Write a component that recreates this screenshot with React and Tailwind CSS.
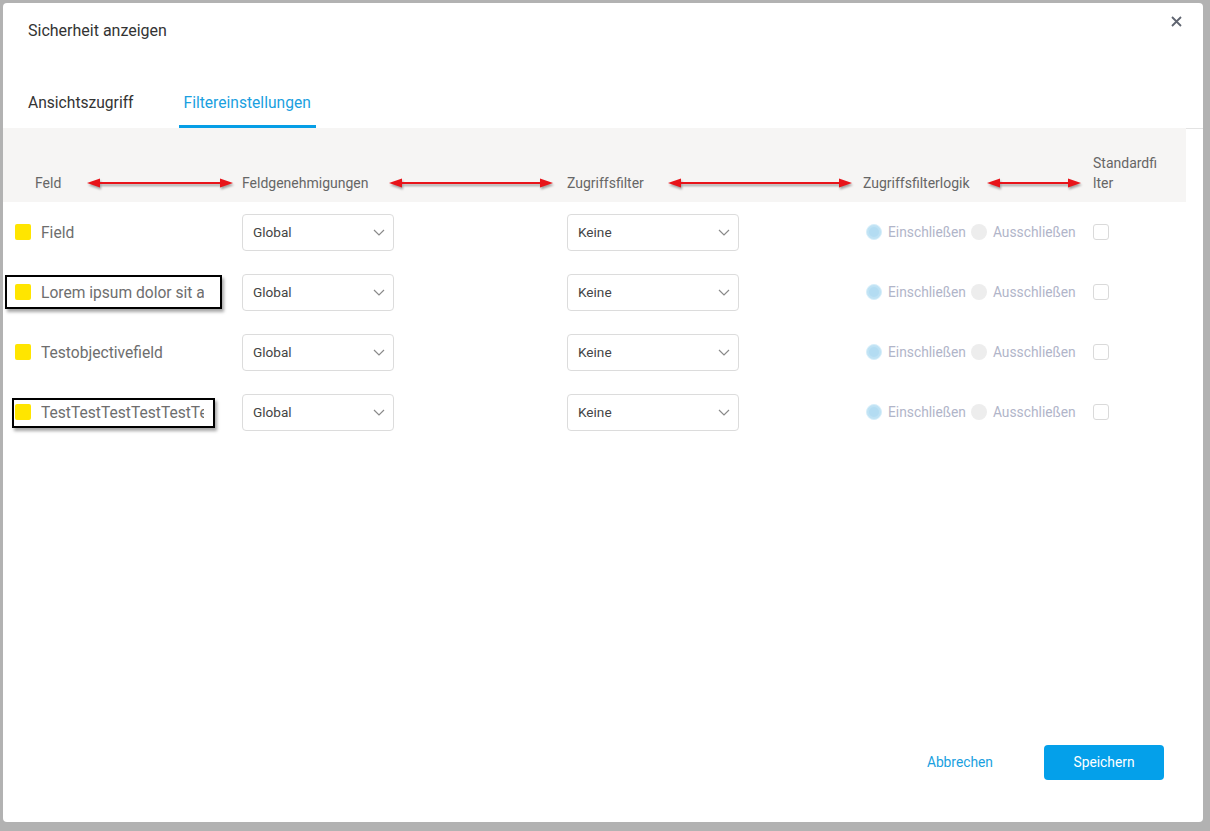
import { useState } from "react"

const rows = [
  { id: 1, name: "Field", marked: null },
  { id: 2, name: "Lorem ipsum dolor sit amet consectetur", marked: "a" },
  { id: 3, name: "Testobjectivefield", marked: null },
  { id: 4, name: "TestTestTestTestTestTestTest", marked: "b" },
]

// page x coords of the red annotation arrows (tip to tip)
const arrows = [
  [87, 233],
  [389, 553],
  [668, 852],
  [987, 1081],
]

function Chevron() {
  return (
    <svg width="12" height="7" viewBox="0 0 12 7" fill="none">
      <path d="M1 1l5 5 5-5" stroke="#8a8a8a" strokeWidth="1.2" />
    </svg>
  )
}

function Select({ value, width }) {
  return (
    <div className={`${width} h-[37px] border border-[#dcdcdc] rounded-[4px] flex items-center justify-between pl-[10px] pr-[8px] text-[13.6px] text-[#444]`}>
      <span>{value}</span>
      <Chevron />
    </div>
  )
}

export default function App() {
  const [tab, setTab] = useState(1)

  return (
    <div className="min-h-screen bg-[#b2b2b2] p-[3px] font-['Roboto',sans-serif]">
      <div className="relative w-[1200px] h-[819px] bg-white rounded-[4px] flex flex-col">
        <button className="absolute right-[21px] top-[12px] w-[12px] h-[12px] flex items-center justify-center">
          <svg width="11" height="11" viewBox="0 0 11 11">
            <path d="M1 1l9 9M10 1l-9 9" stroke="#5f6470" strokeWidth="1.8" />
          </svg>
        </button>

        <h1 className="pl-[25px] pt-[18px] text-[16px] leading-[20px] text-[#333]">Sicherheit anzeigen</h1>

        <div className="mt-[44px] flex gap-[40px] pl-[20px] border-b border-[#e3e3e3]">
          <div
            onClick={() => setTab(0)}
            className={`px-[5px] pt-[8px] pb-[12px] -mb-px text-[15.6px] leading-[20px] border-b-4 cursor-pointer ${tab === 0 ? "border-[#069ee6] text-[#1a9fe0]" : "border-transparent text-[#333]"}`}
          >
            Ansichtszugriff
          </div>
          <div
            onClick={() => setTab(1)}
            className={`px-[5px] pt-[8px] pb-[12px] -mb-px text-[15.6px] leading-[20px] border-b-4 cursor-pointer ${tab === 1 ? "border-[#069ee6] text-[#1a9fe0]" : "border-transparent text-[#333]"}`}
          >
            Filtereinstellungen
          </div>
        </div>

        <div className="w-[1183px] -mt-px">
          <div className="relative h-[74px] bg-[#f6f5f4] grid grid-cols-[239px_325px_296px_230px_93px] items-end pb-[9px] text-[14px] leading-[20px] text-[#666]">
            <div className="pl-[32px]">Feld</div>
            <div>Feldgenehmigungen</div>
            <div>Zugriffsfilter</div>
            <div>Zugriffsfilterlogik</div>
            <div className="w-[66px] break-all">Standardfilter</div>

            <svg className="absolute left-0 top-0 drop-shadow-[1px_2px_1px_rgba(0,0,0,0.35)]" width="1183" height="74">
              {arrows.map(([a, b], i) => {
                const x1 = a - 3
                const x2 = b - 3
                const y = 55
                return (
                  <g key={i} fill="#e8141a" stroke="#e8141a">
                    <line x1={x1 + 10} y1={y} x2={x2 - 10} y2={y} strokeWidth="1.8" />
                    <polygon points={`${x1},${y} ${x1 + 13},${y - 4.5} ${x1 + 13},${y + 4.5}`} strokeWidth="0" />
                    <polygon points={`${x2},${y} ${x2 - 13},${y - 4.5} ${x2 - 13},${y + 4.5}`} strokeWidth="0" />
                  </g>
                )
              })}
            </svg>
          </div>

          {rows.map((r) => (
            <div key={r.id} className="h-[60px] grid grid-cols-[239px_325px_296px_230px_93px] items-center">
              <div className="relative h-full pl-[12px] flex items-center gap-[10px]">
                <span className="w-[16px] h-[16px] rounded-[2px] bg-[#ffe500] shrink-0" />
                <span className="w-[163px] pt-[4px] overflow-hidden whitespace-nowrap text-[15.6px] text-[#6e6e6e]">{r.name}</span>
                {r.marked === "a" && (
                  <div className="absolute left-[2px] top-[13px] w-[217px] h-[34px] border-2 border-black shadow-[2px_3px_3px_rgba(0,0,0,0.35)]" />
                )}
                {r.marked === "b" && (
                  <div className="absolute left-[9px] top-[16px] w-[203px] h-[30px] border-2 border-black shadow-[2px_3px_3px_rgba(0,0,0,0.35)]" />
                )}
              </div>
              <div>
                <Select value="Global" width="w-[152px]" />
              </div>
              <div>
                <Select value="Keine" width="w-[172px]" />
              </div>
              <div className="flex items-center pl-[3px] text-[13.8px] text-[#b1b5c9]">
                <span className="w-[16px] h-[16px] rounded-full bg-[#bfe2f4] border border-[#d6eefa] flex items-center justify-center">
                  <span className="w-[10px] h-[10px] rounded-full bg-[#b3dcf2]" />
                </span>
                <span className="ml-[6px]">Einschließen</span>
                <span className="ml-[5px] w-[16px] h-[16px] rounded-full bg-[#ededed]" />
                <span className="ml-[6px]">Ausschließen</span>
              </div>
              <div>
                <span className="block w-[16px] h-[16px] rounded-[3px] border border-[#dadada]" />
              </div>
            </div>
          ))}
        </div>

        <div className="flex-1" />

        <div className="flex items-center justify-end pr-[39px] pb-[42px] gap-[51px]">
          <button className="text-[13.8px] text-[#1a9fe0]">Abbrechen</button>
          <button className="w-[120px] h-[35px] rounded-[4px] bg-[#04a0ea] text-white text-[13.8px]">Speichern</button>
        </div>
      </div>
    </div>
  )
}
